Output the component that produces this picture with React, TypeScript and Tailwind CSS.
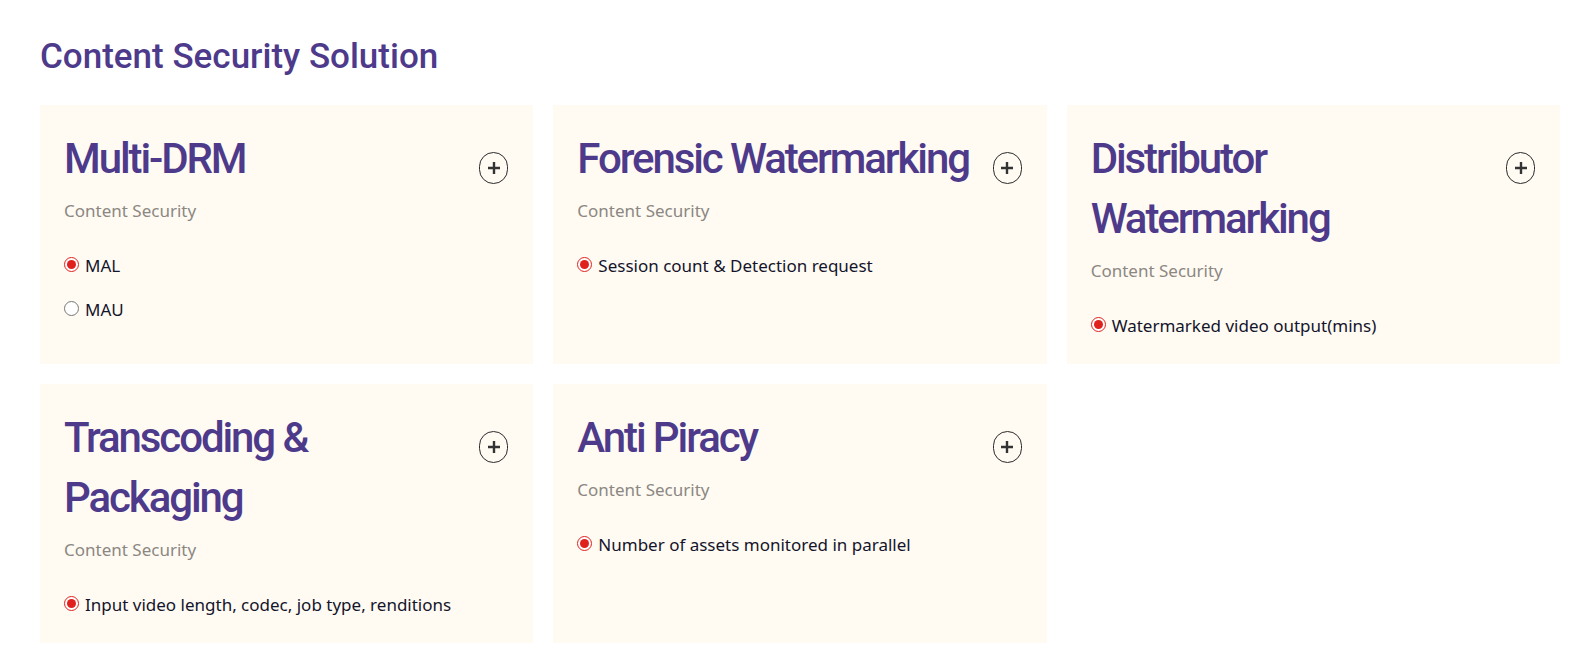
import { useState } from 'react'

type Product = {
  name: string
  category: string
  metrics: string[]
}

const products: Product[] = [
  { name: 'Multi-DRM', category: 'Content Security', metrics: ['MAL', 'MAU'] },
  { name: 'Forensic Watermarking', category: 'Content Security', metrics: ['Session count & Detection request'] },
  { name: 'Distributor Watermarking', category: 'Content Security', metrics: ['Watermarked video output(mins)'] },
  { name: 'Transcoding & Packaging', category: 'Content Security', metrics: ['Input video length, codec, job type, renditions'] },
  { name: 'Anti Piracy', category: 'Content Security', metrics: ['Number of assets monitored in parallel'] },
]

const bodyFont = { fontFamily: '"Noto Sans", Roboto, sans-serif' }

function ProductCard({ product }: { product: Product }) {
  const [selected, setSelected] = useState(product.metrics[0])

  return (
    <div className="bg-[#fffbf3] h-[259px] pl-6 pr-[25px] pt-6">
      <div className="flex justify-between items-start">
        <h2 className="text-[42px] leading-[60px] font-medium tracking-[-0.05em] text-[#4e3a8b]">{product.name}</h2>
        <button className="mt-[23px] ml-2 shrink-0 w-[29px] h-[32px] rounded-full border border-[#2a2a2a] flex items-center justify-center focus:outline-none">
          <svg width="14" height="14" viewBox="0 0 14 14" fill="none">
            <path d="M7 1v12M1 7h12" stroke="#333" strokeWidth="2.4" />
          </svg>
        </button>
      </div>
      <p className="mt-[10px] text-[17px] leading-6 text-[#8c8782]" style={bodyFont}>{product.category}</p>
      <div className="mt-[31px] flex flex-col gap-[20px]">
        {product.metrics.map((m) => (
          <label key={m} className="flex items-center gap-[6px] text-[17px] leading-6 text-[#14142b] cursor-pointer" style={bodyFont}>
            <input
              type="radio"
              name={product.name}
              checked={selected === m}
              onChange={() => setSelected(m)}
              className="m-0 w-[15px] h-[15px] -mt-[3px] accent-[#e0201c]"
            />
            {m}
          </label>
        ))}
      </div>
    </div>
  )
}

export default function App() {
  return (
    <div className="bg-white pl-10 pr-6 pt-[35px]" style={{ fontFamily: 'Roboto, "Noto Sans", sans-serif' }}>
      <h1 className="text-[35px] leading-[44px] font-medium tracking-normal text-[#4e3a8b] mb-[26px]">Content Security Solution</h1>
      <div className="grid grid-cols-3 gap-5">
        {products.map((p) => (
          <ProductCard key={p.name} product={p} />
        ))}
      </div>
    </div>
  )
}
